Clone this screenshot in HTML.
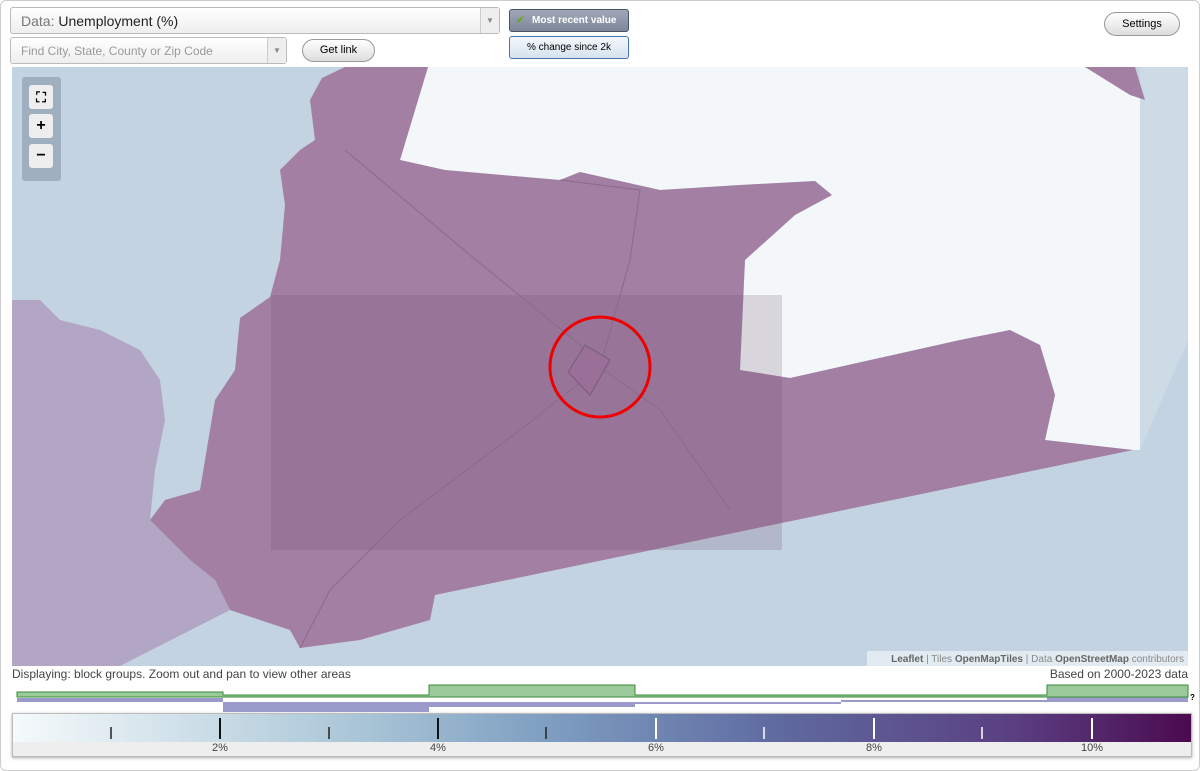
<!DOCTYPE html>
<html><head><style>
body{margin:0;width:1200px;height:771px;background:#fff;font-family:"Liberation Sans",sans-serif;overflow:hidden;position:relative}
.frame{position:absolute;left:0;top:0;width:1198px;height:769px;border:1px solid #ccc;border-radius:6px}
.sel{position:absolute;border:1px solid #bbb;border-radius:3px;background:linear-gradient(#fff,#eee);box-sizing:border-box}
.arrow{position:absolute;right:0;top:0;bottom:0;width:18px;border-left:1px solid #ccc;background:#eee;color:#888;font-size:8px;text-align:center}
.btn{position:absolute;border:1px solid #999;border-radius:12px;background:linear-gradient(#fff,#ddd);font-size:11px;text-align:center;box-sizing:border-box}
.zb{position:absolute;left:29px;width:24px;height:24px;background:#eee;border-radius:3px;text-align:center;font-weight:bold;font-size:16px;line-height:24px}
</style></head><body>
<div class="frame"></div>
<div class="sel" style="left:10px;top:7px;width:490px;height:27px;font-size:14px;line-height:26px;padding-left:10px;color:#222"><span style="color:#777">Data:</span> Unemployment (%)<div class="arrow" style="line-height:26px">▼</div></div>
<div class="sel" style="left:10px;top:37px;width:277px;height:27px;font-size:12px;line-height:26px;padding-left:10px;color:#999">Find City, State, County or Zip Code<div class="arrow" style="line-height:26px">▼</div></div>
<div class="btn" style="left:302px;top:39px;width:73px;height:23px;line-height:21px;font-size:11px">Get link</div>
<div style="position:absolute;left:509px;top:9px;width:120px;height:23px;border:1px solid #456;border-radius:3px;background:linear-gradient(#a0a8b8,#7d8799);color:#fff;font-size:10px;font-weight:bold;line-height:22px;box-sizing:border-box;padding-left:22px">Most recent value<span style="position:absolute;left:6px;top:0;color:#6a2">✔</span></div>
<div style="position:absolute;left:509px;top:36px;width:120px;height:23px;border:1px solid #47a;border-radius:3px;background:linear-gradient(#f4f8fc,#d6e2ee);font-size:10px;line-height:21px;box-sizing:border-box;text-align:center">% change since 2k</div>
<div class="btn" style="left:1104px;top:12px;width:76px;height:24px;line-height:22px">Settings</div>

<svg style="position:absolute;left:12px;top:67px" width="1176" height="599" viewBox="12 67 1176 599">
<rect x="12" y="67" width="1176" height="599" fill="#c3d3e1"/>
<polygon points="428,67 1085,67 1145,100 1140,450 1133,450 1045,440 1055,395 1040,345 1010,330 960,340 790,378 740,370 745,260 795,215 832,195 815,181 740,185 660,190 580,172 560,180 445,170 400,160" fill="#f4f7f9"/>
<polygon points="1140,67 1188,67 1188,340 1140,450" fill="#cddbe7"/>
<polygon points="12,300 40,300 60,320 100,330 140,350 160,380 165,420 155,470 150,520 175,545 190,560 215,580 230,610 120,666 12,666" fill="#b2a6c4"/>
<polygon points="322,78 345,67 428,67 400,160 445,170 560,180 580,172 660,190 740,185 815,181 832,195 795,215 745,260 740,370 790,378 960,340 1010,330 1040,345 1055,395 1045,440 1133,450 435,595 430,620 360,640 300,648 290,630 230,610 215,580 190,560 175,545 150,520 165,500 200,490 210,430 215,400 235,370 240,318 270,297 280,260 285,205 280,170 300,150 315,140 310,100" fill="#a37fa3"/>
<polygon points="1085,67 1135,67 1145,100 1130,95" fill="#a37fa3"/>
<rect x="271" y="295" width="511" height="255" fill="#6e4f6e" opacity="0.2"/>
<g stroke="#8a6a8a" stroke-width="1" fill="none">
<path d="M345,150 L470,255 L580,345 L600,367 L660,410 L730,510"/>
<path d="M560,180 L640,190 L630,260 L600,367 L520,430 L400,520 L330,590 L300,648"/>
</g>
<polygon points="568,372 585,345 610,360 590,395" fill="#9a6f98" stroke="#7a5a7a"/>
<circle cx="600" cy="367" r="50" fill="none" stroke="#e00" stroke-width="3"/>
<rect x="22" y="77" width="39" height="104" rx="3" fill="#8898a8" opacity="0.6"/>
<rect x="867" y="651" width="321" height="15" fill="#e8eef3" opacity="0.85"/>
<text x="1184" y="662" font-size="10" text-anchor="end" fill="#888" font-family="Liberation Sans"><tspan font-weight="bold" fill="#666">Leaflet</tspan> | Tiles <tspan font-weight="bold" fill="#666">OpenMapTiles</tspan> | Data <tspan font-weight="bold" fill="#666">OpenStreetMap</tspan> contributors</text>
</svg>
<div class="zb" style="top:85px;font-size:14px">⛶</div>
<div class="zb" style="top:114px">+</div>
<div class="zb" style="top:144px">−</div>
<div style="position:absolute;left:12px;top:667px;font-size:12px;color:#444">Displaying: block groups. Zoom out and pan to view other areas</div>
<div style="position:absolute;right:12px;top:667px;font-size:12px;color:#444">Based on 2000-2023 data</div>
<svg style="position:absolute;left:0;top:680px" width="1200" height="35">
<polygon points="17,18 223,18 223,32 429,32 429,27 635,27 635,24 841,24 841,20 1047,20 1047,17 1188,17 1188,22 17,22" fill="#9b9bcb"/>
<polygon points="17,12 223,12 223,15 429,15 429,5 635,5 635,15 1047,15 1047,5 1188,5 1188,17 17,17" fill="#9bcb9b" stroke="#3a8a3a"/>
<text x="1190" y="20" font-size="8" font-weight="bold">?</text>
</svg>
<div style="position:absolute;left:12px;top:713px;width:1178px;height:42px;border:1px solid #bbb;background:#eee;box-shadow:0 1px 3px #aaa">
<div style="height:28px;background:linear-gradient(90deg,#f5fafb,#a8c4d6 30%,#7f9fc2 45%,#5f6aa0 65%,#5a3f82 85%,#4b0a4f)"></div>
</div>
<svg style="position:absolute;left:12px;top:713px" width="1180" height="45">
<g stroke-width="1.5"><line x1="99" y1="14" x2="99" y2="26" stroke="#222"/><line x1="208" y1="5" x2="208" y2="26" stroke="#111" stroke-width="2"/><line x1="317" y1="14" x2="317" y2="26" stroke="#222"/><line x1="426" y1="5" x2="426" y2="26" stroke="#111" stroke-width="2"/><line x1="534" y1="14" x2="534" y2="26" stroke="#222"/><line x1="644" y1="5" x2="644" y2="26" stroke="#fff" stroke-width="2"/><line x1="752" y1="14" x2="752" y2="26" stroke="#fff"/><line x1="862" y1="5" x2="862" y2="26" stroke="#fff" stroke-width="2"/><line x1="970" y1="14" x2="970" y2="26" stroke="#fff"/><line x1="1080" y1="5" x2="1080" y2="26" stroke="#fff" stroke-width="2"/></g>
<g font-size="11" fill="#444" text-anchor="middle" font-family="Liberation Sans"><text x="208" y="38">2%</text><text x="426" y="38">4%</text><text x="644" y="38">6%</text><text x="862" y="38">8%</text><text x="1080" y="38">10%</text></g>
</svg>
</body></html>
